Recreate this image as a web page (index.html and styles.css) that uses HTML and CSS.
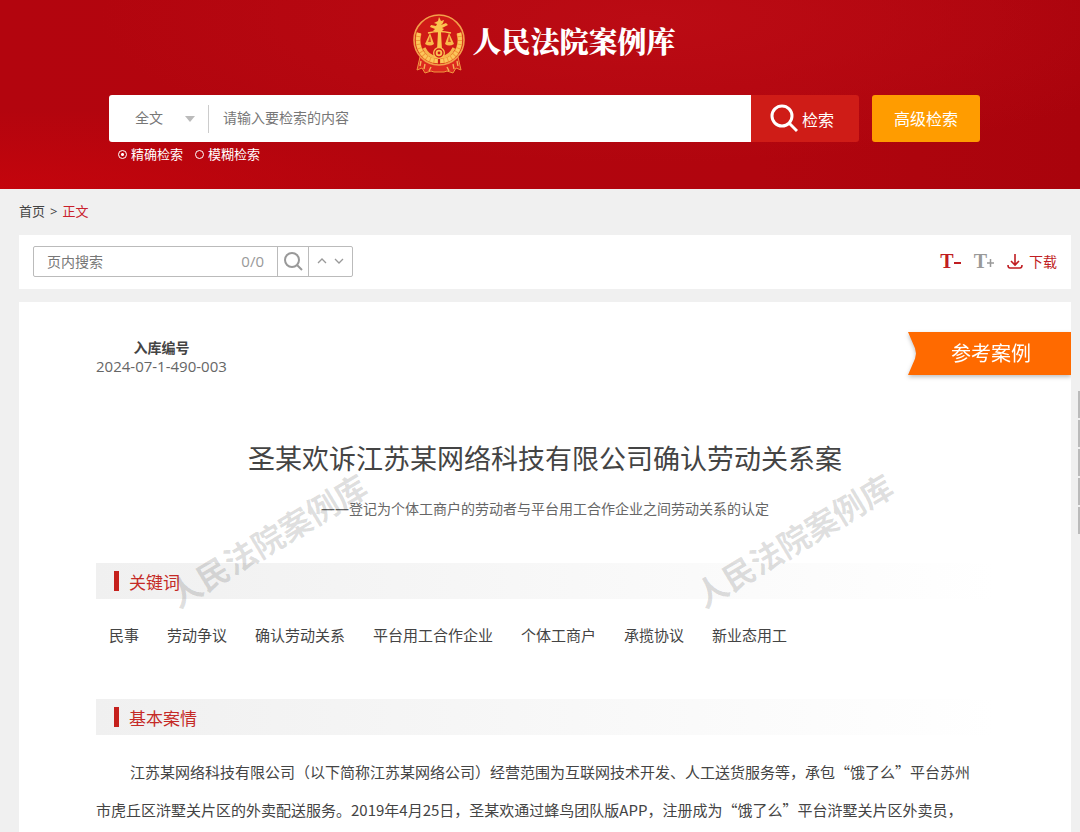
FILE: index.html
```html
<!DOCTYPE html>
<html lang="zh-CN">
<head>
  <meta charset="UTF-8">
  <title>人民法院案例库</title>
  <link rel="stylesheet" href="styles.css">
</head>
<body>

  <header class="header">
    <div class="logo">
      <svg class="emblem" width="52" height="60" viewBox="0 0 52 60">
        <path d="M7 43 L4 56 L9 54 L12 59 L18 57 L21 58 H31 L34 57 L40 59 L43 54 L48 56 L45 43 Z" fill="#dd2a1f" stroke="#f0983f"/>
        <path d="M8 47 L7 52 M12 50 L11 55 M18 53 L16 57 M44 47 L45 52 M40 50 L41 55 M34 53 L36 57" stroke="#f5ae58" stroke-width="1.4"/>
        <circle cx="26" cy="26" r="25" fill="#cf1a16" stroke="#f3a04a" stroke-width="1.6"/>
        <!-- wheat wreath -->
        <path d="M6 19 C2 34 11 47 25 47 M46 19 C50 34 41 47 27 47" fill="none" stroke="#f19a35" stroke-width="5"/>
        <path d="M6 19 C2 34 11 47 25 47 M46 19 C50 34 41 47 27 47" fill="none" stroke="#fcc65c" stroke-width="4" stroke-dasharray="3 1"/>
        <path d="M11 34 C14 40 19 43 23 43 M41 34 C38 40 33 43 29 43" fill="none" stroke="#f7b54c" stroke-width="3"/>
        <!-- pillar and scales -->
        <path d="M24 36 L25 18 L20 17 L22 15 L17 13 L18 11 L23 12 L24 10 L21 9 L25 7 L26 3 L28 7 L31 6 L30 9 L28 11 L33 9 L35 11 L29 14 L31 15 L28 18 L29 36 Z" fill="#fbc44f"/>
        <path d="M15 19 Q26 16 38 19" fill="none" stroke="#fbc44f" stroke-width="1.6"/>
        <path d="M17 19 L12 30 Q17 33 21 30 Z M36 19 L32 30 Q36 33 41 30 Z" fill="#f9b94b"/>
        <path d="M17 22 L15 28 H18 Z M36 22 L35 28 H38 Z" fill="#dc4a25"/>
        <!-- gear -->
        <circle cx="26" cy="39" r="6" fill="#fbc050"/>
        <circle cx="26" cy="39" r="4" fill="none" stroke="#cf1a16" stroke-width="1.4"/>
        <circle cx="26" cy="39" r="1.4" fill="#cf1a16"/>
      </svg>
      <h1 class="logo-text">人民法院案例库</h1>
    </div>

    <form class="search">
      <div class="search-row">
        <div class="search-box">
          <div class="scope">
            <select aria-label="检索范围">
              <option>全文</option>
            </select>
          </div>
          <input type="text" class="search-input" aria-label="检索内容" placeholder="请输入要检索的内容">
        </div>
        <button type="button" class="search-btn">
          <svg width="28" height="29" viewBox="0 0 28 29" fill="none" stroke="currentColor" stroke-width="3">
            <circle cx="12" cy="12" r="10"/>
            <path d="M19 19 L27 27"/>
          </svg>
          检索
        </button>
        <button type="button" class="advanced-btn">高级检索</button>
      </div>
      <div class="modes">
        <label><input type="radio" name="mode" checked>精确检索</label>
        <label><input type="radio" name="mode">模糊检索</label>
      </div>
    </form>
  </header>

  <main class="page">
    <nav class="breadcrumb">
      <a href="#">首页</a>
      <span>&gt;</span>
      <a href="#" class="current">正文</a>
    </nav>

    <div class="toolbar">
      <div class="find">
        <input type="text" class="find-input" aria-label="页内搜索" placeholder="页内搜索">
        <span class="find-count">0/0</span>
        <button type="button" class="find-btn" aria-label="搜索">
          <svg width="20" height="20" viewBox="0 0 20 20" fill="none" stroke="currentColor" stroke-width="2">
            <circle cx="9" cy="9" r="7"/>
            <path d="M14 14 L19 19"/>
          </svg>
        </button>
        <div class="find-nav">
          <button type="button" aria-label="上一个">
            <svg width="10" height="6" viewBox="0 0 10 6" fill="none" stroke="currentColor" stroke-width="1.3"><path d="M1 5 L5 1 L9 5"/></svg>
          </button>
          <button type="button" aria-label="下一个">
            <svg width="10" height="6" viewBox="0 0 10 6" fill="none" stroke="currentColor" stroke-width="1.3"><path d="M1 1 L5 5 L9 1"/></svg>
          </button>
        </div>
      </div>
      <div class="tools">
        <button type="button" class="font-btn smaller" aria-label="缩小字号">T<svg width="7" height="8" viewBox="0 0 7 8" stroke="currentColor" stroke-width="2"><path d="M0 4 H7"/></svg></button>
        <button type="button" class="font-btn" aria-label="放大字号">T<svg width="7" height="8" viewBox="0 0 7 8" stroke="currentColor" stroke-width="1.5"><path d="M0 4 H7 M3.5 0 V8"/></svg></button>
        <a href="#" class="download">
          <svg width="16" height="17" viewBox="0 0 16 17" fill="none" stroke="currentColor" stroke-width="1.6">
            <path d="M8 1 V12 M4 8 L8 12 L12 8 M1 12 Q1 15 3 15 H13 Q15 15 15 12"/>
          </svg>
          下载
        </a>
      </div>
    </div>

    <article class="case">
      <div class="case-top">
        <div class="case-no">
          <strong>入库编号</strong>
          <span>2024-07-1-490-003</span>
        </div>
        <div class="ribbon"><span>参考案例</span></div>
      </div>

      <h2 class="case-title">圣某欢诉江苏某网络科技有限公司确认劳动关系案</h2>
      <p class="case-subtitle">——登记为个体工商户的劳动者与平台用工合作企业之间劳动关系的认定</p>

      <h3 class="section-title">关键词</h3>
      <ul class="keywords">
        <li>民事</li>
        <li>劳动争议</li>
        <li>确认劳动关系</li>
        <li>平台用工合作企业</li>
        <li>个体工商户</li>
        <li>承揽协议</li>
        <li>新业态用工</li>
      </ul>

      <h3 class="section-title">基本案情</h3>
      <p class="case-text">江苏某网络科技有限公司（以下简称江苏某网络公司）经营范围为互联网技术开发、人工送货服务等，承包“饿了么”平台苏州市虎丘区浒墅关片区的外卖配送服务。2019年4月25日，圣某欢通过蜂鸟团队版APP，注册成为“饿了么”平台浒墅关片区外卖员，</p>

      <div class="watermark left">人民法院案例库</div>
      <div class="watermark right">人民法院案例库</div>
    </article>
  </main>

  <aside class="side-bar">
    <i></i><i></i><i></i><i></i><i></i>
  </aside>

</body>
</html>
```
FILE: styles.css
```css
* {
  box-sizing: border-box;
}

body {
  margin: 0;
  font-family: "Open Sans", "Noto Sans CJK SC", sans-serif;
  font-size: 15px;
  color: #444;
  background: #f0f0f0;
}

button, input, select {
  font-family: inherit;
  border: none;
  border-radius: 0;
  background: none;
  padding: 0;
  margin: 0;
}

button {
  cursor: pointer;
}

a {
  color: inherit;
  text-decoration: none;
}

/* Header */
.header {
  height: 189px;
  padding: 14px 10px 0 19px;
  background:
    radial-gradient(ellipse at 0 100%, rgba(200, 4, 12, 0.8), transparent 30%),
    radial-gradient(ellipse at 60% 10%, #bb0b14, transparent 60%),
    linear-gradient(to right, #b3050e, #b1050e 70%, #a9030c);
  color: #fff;
}

.logo {
  display: flex;
  justify-content: center;
  gap: 7px;
  height: 60px;
}

.logo-text {
  margin: 0;
  font-family: "Noto Serif CJK SC", "Noto Sans CJK SC", serif;
  font-size: 29px;
  line-height: 54px;
  font-weight: 900;
}

.search {
  max-width: 871px;
  margin: 21px auto 0;
}

.search-row {
  display: flex;
  height: 47px;
}

.search-box {
  flex: 1;
  display: flex;
  align-items: center;
  background: #fff;
  border-radius: 3px 0 0 3px;
}

.scope {
  position: relative;
  width: 100px;
  border-right: 1px solid #ccc;
}

.scope::after {
  content: "";
  position: absolute;
  right: 13px;
  top: 11px;
  border: 5px solid transparent;
  border-top: 6px solid #bbb;
  border-bottom: 0;
  pointer-events: none;
}

.scope select {
  appearance: none;
  width: 100%;
  height: 28px;
  padding: 0 0 2px 26px;
  font-size: 14px;
  color: #777;
}

.search-input {
  flex: 1;
  height: 28px;
  padding: 0 0 2px 14px;
  font-size: 14px;
}

.search-input::placeholder {
  color: #777;
}

.search-btn {
  display: flex;
  align-items: center;
  justify-content: center;
  gap: 4px;
  width: 108px;
  padding-right: 6px;
  background: #cf1c17;
  border-radius: 0 3px 3px 0;
  color: #fff;
  font-size: 16px;
}

.advanced-btn {
  width: 108px;
  margin-left: 13px;
  padding-bottom: 2px;
  background: #ff9c00;
  border-radius: 3px;
  color: #fff;
  font-size: 16px;
}

.modes {
  display: flex;
  gap: 12px;
  padding-left: 9px;
  font-size: 13px;
  line-height: 24px;
}

.modes label {
  display: flex;
  align-items: center;
  gap: 4px;
}

.modes input {
  appearance: none;
  width: 9px;
  height: 9px;
  border: 1px solid #fff;
  border-radius: 50%;
}

.modes input:checked {
  background: radial-gradient(circle, #fff 0 1px, transparent 2px);
}

/* Page */
.page {
  padding: 0 9px 0 19px;
}

.breadcrumb {
  display: flex;
  gap: 5px;
  height: 46px;
  font-size: 13px;
  line-height: 44px;
}

.breadcrumb .current {
  color: #c9202b;
}

.toolbar {
  display: flex;
  justify-content: space-between;
  align-items: center;
  height: 54px;
  padding: 0 14px 2px;
  background: #fff;
}

.find {
  display: flex;
  align-items: center;
  width: 320px;
  height: 31px;
  border: 1px solid #bbb;
  border-radius: 2px;
  color: #999;
}

.find-input {
  flex: 1;
  min-width: 0;
  height: 29px;
  padding-left: 13px;
  font-size: 14px;
}

.find-input::placeholder {
  color: #777;
}

.find-count {
  margin-right: 13px;
}

.find-btn {
  display: grid;
  place-items: center;
  width: 32px;
  height: 29px;
  border: 1px solid #bbb;
  border-width: 0 1px;
  color: #999;
}

.find-nav {
  display: flex;
  justify-content: space-evenly;
  width: 43px;
}

.find-nav button {
  display: flex;
  color: #999;
}

.tools {
  display: flex;
  align-items: center;
  gap: 13px;
}

.font-btn {
  display: flex;
  align-items: center;
  font-family: "Liberation Serif", serif;
  font-size: 20px;
  font-weight: bold;
  color: #999;
}

.font-btn svg {
  margin-top: 4px;
}

.font-btn.smaller,
.download {
  color: #c01d22;
}

.download {
  display: flex;
  align-items: center;
  gap: 6px;
  font-size: 14px;
}

/* Case */
.case {
  position: relative;
  height: calc(100vh - 302px);
  min-height: 530px;
  overflow: hidden;
  margin-top: 13px;
  padding: 30px 0 0 77px;
  background: #fff;
}

.case-top {
  display: flex;
  justify-content: space-between;
  align-items: flex-start;
}

.case-no {
  display: flex;
  flex-direction: column;
  align-items: center;
  padding-top: 6px;
  font-size: 14px;
  line-height: 19px;
}

.case-no span {
  font-size: 15px;
  color: #666;
}

.ribbon {
  filter: drop-shadow(0 2px 2px rgba(0, 0, 0, 0.25));
}

.ribbon span {
  display: block;
  width: 163px;
  padding-left: 43px;
  background: #ff6a00;
  clip-path: polygon(0 0, 100% 0, 100% 100%, 0 100%, 7px 62%, 8px 50%, 7px 38%);
  color: #fff;
  font-size: 20px;
  line-height: 43px;
}

.case-title {
  margin: 63px 77px 0 0;
  text-align: center;
  font-size: 27px;
  line-height: 40px;
  font-weight: normal;
}

.case-subtitle {
  margin: 20px 77px 0 0;
  text-align: center;
  font-size: 14px;
  line-height: 20px;
  color: #666;
}

.section-title {
  display: flex;
  align-items: center;
  gap: 10px;
  height: 36px;
  margin: 44px 77px 0 0;
  padding-left: 18px;
  background: linear-gradient(to right, #f0f0f0, #fff);
  color: #c52a26;
  font-size: 17px;
  font-weight: normal;
}

.section-title::before {
  content: "";
  width: 5px;
  height: 20px;
  background: #c5201c;
}

.keywords {
  display: flex;
  gap: 28px;
  margin: 25px 0 0;
  padding: 0 0 0 13px;
  list-style: none;
  line-height: 22px;
}

.keywords + .section-title {
  margin-top: 53px;
}

.case-text {
  margin: 18px 77px 0 0;
  padding-right: 10px;
  font-family: "Noto Sans CJK SC", sans-serif;
  text-indent: 34px;
  line-height: 38px;
}

.watermark {
  position: absolute;
  top: 216px;
  font-size: 32px;
  line-height: 46px;
  font-weight: bold;
  color: rgba(0, 0, 0, 0.13);
  transform: rotate(-31deg);
  pointer-events: none;
}

.watermark.left {
  left: 13%;
}

.watermark.right {
  left: 63%;
}

/* Side bar on the right edge */
.side-bar {
  position: fixed;
  top: 391px;
  right: 0;
  display: flex;
  flex-direction: column;
  gap: 2px;
}

.side-bar i {
  width: 2px;
  height: 27px;
  background: #bbb;
}
```
